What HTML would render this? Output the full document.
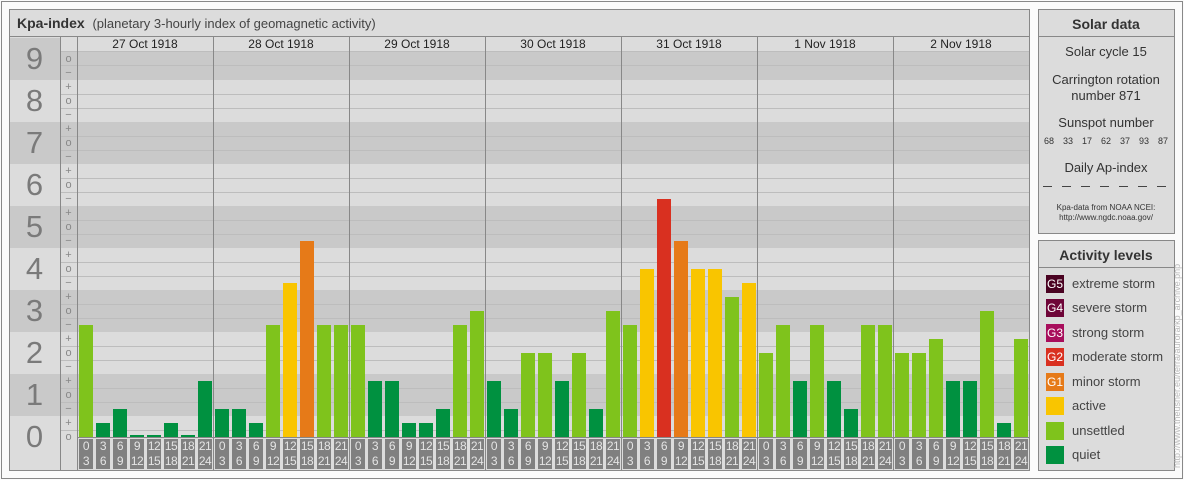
<!DOCTYPE html>
<html><head><meta charset="utf-8"><style>
*{margin:0;padding:0;box-sizing:border-box}
body{width:1184px;height:480px;background:#fbfbfb;position:relative;overflow:hidden;font-family:"Liberation Sans",sans-serif;color:#333}
.a{position:absolute}
.frame{left:1px;top:1px;width:1182px;height:478px;border:1px solid #888}
.panel{border:1px solid #888;background:#dcdcdc}
.bd{background:#c9c9c9}
.bl{background:#dcdcdc}
.hl{height:1px;background:#bdbdbd}
.vl{width:1px;background:#888}
.num{font-size:31px;color:#7a7a7a;text-align:center;width:51px;left:9px}
.sg{font-size:11px;color:#888;width:17px;left:60px;text-align:center;line-height:14px}
.b{position:absolute;width:14px}
.q{background:#009140}.u{background:#7fc31c}.y{background:#f9c500}.o{background:#e67a18}.r{background:#d93020}
.t{position:absolute;top:439px;width:14px;height:30px;background:#808080;color:#e4e4e4;font-size:12px;line-height:15px;text-align:center;letter-spacing:-0.5px}
.dt{font-size:12px;color:#222;top:37px;height:14px;line-height:14px;width:136px;text-align:center}
.c{text-align:center;width:136px;left:1038px;color:#333}
.sq{left:1046px;width:18px;height:18px;color:#fff;font-size:12px;line-height:18px;text-align:center}
.lt{left:1072px;font-size:13px;color:#444;line-height:18px}
.sn{position:absolute;top:136px;font-size:9px;line-height:10px;color:#333;width:20px;text-align:center}
.dd{position:absolute;top:186px;width:9px;height:1px;background:#444}
</style></head><body>
<div class="a frame"></div>
<div class="a panel" style="left:9px;top:9px;width:1021px;height:462px"></div>
<div class="a" style="left:10px;top:10px;width:1019px;height:27px;background:#dcdcdc;border-bottom:1px solid #888"></div>
<div class="a" style="left:17px;top:14px;font-size:14px;line-height:18px"><b style="color:#333">Kpa-index</b>&nbsp; <span style="font-size:13px;color:#444">(planetary 3-hourly index of geomagnetic activity)</span></div>
<div class="a bd" style="left:10px;top:38px;width:1019px;height:42px"></div>
<div class="a bl" style="left:10px;top:80px;width:1019px;height:42px"></div>
<div class="a bd" style="left:10px;top:122px;width:1019px;height:42px"></div>
<div class="a bl" style="left:10px;top:164px;width:1019px;height:42px"></div>
<div class="a bd" style="left:10px;top:206px;width:1019px;height:42px"></div>
<div class="a bl" style="left:10px;top:248px;width:1019px;height:42px"></div>
<div class="a bd" style="left:10px;top:290px;width:1019px;height:42px"></div>
<div class="a bl" style="left:10px;top:332px;width:1019px;height:42px"></div>
<div class="a bd" style="left:10px;top:374px;width:1019px;height:42px"></div>
<div class="a bl" style="left:10px;top:416px;width:1019px;height:54px"></div>
<div class="a hl" style="left:61px;top:65px;width:968px"></div>
<div class="a hl" style="left:61px;top:94px;width:968px"></div><div class="a hl" style="left:61px;top:108px;width:968px"></div>
<div class="a hl" style="left:61px;top:136px;width:968px"></div><div class="a hl" style="left:61px;top:150px;width:968px"></div>
<div class="a hl" style="left:61px;top:178px;width:968px"></div><div class="a hl" style="left:61px;top:192px;width:968px"></div>
<div class="a hl" style="left:61px;top:220px;width:968px"></div><div class="a hl" style="left:61px;top:234px;width:968px"></div>
<div class="a hl" style="left:61px;top:262px;width:968px"></div><div class="a hl" style="left:61px;top:276px;width:968px"></div>
<div class="a hl" style="left:61px;top:304px;width:968px"></div><div class="a hl" style="left:61px;top:318px;width:968px"></div>
<div class="a hl" style="left:61px;top:346px;width:968px"></div><div class="a hl" style="left:61px;top:360px;width:968px"></div>
<div class="a hl" style="left:61px;top:388px;width:968px"></div><div class="a hl" style="left:61px;top:402px;width:968px"></div>
<div class="a hl" style="left:61px;top:430px;width:968px"></div>
<div class="a" style="left:61px;top:38px;width:968px;height:14px;background:#dcdcdc;border-bottom:1px solid #bdbdbd"></div>
<div class="a dt" style="left:77px">27 Oct 1918</div>
<div class="a dt" style="left:213px">28 Oct 1918</div>
<div class="a dt" style="left:349px">29 Oct 1918</div>
<div class="a dt" style="left:485px">30 Oct 1918</div>
<div class="a dt" style="left:621px">31 Oct 1918</div>
<div class="a dt" style="left:757px">1 Nov 1918</div>
<div class="a dt" style="left:893px">2 Nov 1918</div>
<div class="a num" style="top:41px">9</div>
<div class="a num" style="top:83px">8</div>
<div class="a num" style="top:125px">7</div>
<div class="a num" style="top:167px">6</div>
<div class="a num" style="top:209px">5</div>
<div class="a num" style="top:251px">4</div>
<div class="a num" style="top:293px">3</div>
<div class="a num" style="top:335px">2</div>
<div class="a num" style="top:377px">1</div>
<div class="a num" style="top:419px">0</div>
<div class="a sg" style="top:52px">o<br>−<br>+<br>o<br>−<br>+<br>o<br>−<br>+<br>o<br>−<br>+<br>o<br>−<br>+<br>o<br>−<br>+<br>o<br>−<br>+<br>o<br>−<br>+<br>o<br>−<br>+<br>o</div>
<div class="a vl" style="left:60px;top:37px;height:433px"></div>
<div class="a vl" style="left:77px;top:37px;height:433px"></div>
<div class="a vl" style="left:213px;top:37px;height:433px"></div>
<div class="a vl" style="left:349px;top:37px;height:433px"></div>
<div class="a vl" style="left:485px;top:37px;height:433px"></div>
<div class="a vl" style="left:621px;top:37px;height:433px"></div>
<div class="a vl" style="left:757px;top:37px;height:433px"></div>
<div class="a vl" style="left:893px;top:37px;height:433px"></div>
<div class="a" style="left:77px;top:437px;width:952px;height:1px;background:#888"></div>
<div class="b u" style="left:79px;top:325px;height:112px"></div>
<div class="b q" style="left:96px;top:423px;height:14px"></div>
<div class="b q" style="left:113px;top:409px;height:28px"></div>
<div class="b q" style="left:130px;top:435px;height:2px"></div>
<div class="b q" style="left:147px;top:435px;height:2px"></div>
<div class="b q" style="left:164px;top:423px;height:14px"></div>
<div class="b q" style="left:181px;top:435px;height:2px"></div>
<div class="b q" style="left:198px;top:381px;height:56px"></div>
<div class="b q" style="left:215px;top:409px;height:28px"></div>
<div class="b q" style="left:232px;top:409px;height:28px"></div>
<div class="b q" style="left:249px;top:423px;height:14px"></div>
<div class="b u" style="left:266px;top:325px;height:112px"></div>
<div class="b y" style="left:283px;top:283px;height:154px"></div>
<div class="b o" style="left:300px;top:241px;height:196px"></div>
<div class="b u" style="left:317px;top:325px;height:112px"></div>
<div class="b u" style="left:334px;top:325px;height:112px"></div>
<div class="b u" style="left:351px;top:325px;height:112px"></div>
<div class="b q" style="left:368px;top:381px;height:56px"></div>
<div class="b q" style="left:385px;top:381px;height:56px"></div>
<div class="b q" style="left:402px;top:423px;height:14px"></div>
<div class="b q" style="left:419px;top:423px;height:14px"></div>
<div class="b q" style="left:436px;top:409px;height:28px"></div>
<div class="b u" style="left:453px;top:325px;height:112px"></div>
<div class="b u" style="left:470px;top:311px;height:126px"></div>
<div class="b q" style="left:487px;top:381px;height:56px"></div>
<div class="b q" style="left:504px;top:409px;height:28px"></div>
<div class="b u" style="left:521px;top:353px;height:84px"></div>
<div class="b u" style="left:538px;top:353px;height:84px"></div>
<div class="b q" style="left:555px;top:381px;height:56px"></div>
<div class="b u" style="left:572px;top:353px;height:84px"></div>
<div class="b q" style="left:589px;top:409px;height:28px"></div>
<div class="b u" style="left:606px;top:311px;height:126px"></div>
<div class="b u" style="left:623px;top:325px;height:112px"></div>
<div class="b y" style="left:640px;top:269px;height:168px"></div>
<div class="b r" style="left:657px;top:199px;height:238px"></div>
<div class="b o" style="left:674px;top:241px;height:196px"></div>
<div class="b y" style="left:691px;top:269px;height:168px"></div>
<div class="b y" style="left:708px;top:269px;height:168px"></div>
<div class="b u" style="left:725px;top:297px;height:140px"></div>
<div class="b y" style="left:742px;top:283px;height:154px"></div>
<div class="b u" style="left:759px;top:353px;height:84px"></div>
<div class="b u" style="left:776px;top:325px;height:112px"></div>
<div class="b q" style="left:793px;top:381px;height:56px"></div>
<div class="b u" style="left:810px;top:325px;height:112px"></div>
<div class="b q" style="left:827px;top:381px;height:56px"></div>
<div class="b q" style="left:844px;top:409px;height:28px"></div>
<div class="b u" style="left:861px;top:325px;height:112px"></div>
<div class="b u" style="left:878px;top:325px;height:112px"></div>
<div class="b u" style="left:895px;top:353px;height:84px"></div>
<div class="b u" style="left:912px;top:353px;height:84px"></div>
<div class="b u" style="left:929px;top:339px;height:98px"></div>
<div class="b q" style="left:946px;top:381px;height:56px"></div>
<div class="b q" style="left:963px;top:381px;height:56px"></div>
<div class="b u" style="left:980px;top:311px;height:126px"></div>
<div class="b q" style="left:997px;top:423px;height:14px"></div>
<div class="b u" style="left:1014px;top:339px;height:98px"></div>
<div class="t" style="left:79px">0<br>3</div><div class="t" style="left:96px">3<br>6</div><div class="t" style="left:113px">6<br>9</div><div class="t" style="left:130px">9<br>12</div><div class="t" style="left:147px">12<br>15</div><div class="t" style="left:164px">15<br>18</div><div class="t" style="left:181px">18<br>21</div><div class="t" style="left:198px">21<br>24</div>
<div class="t" style="left:215px">0<br>3</div><div class="t" style="left:232px">3<br>6</div><div class="t" style="left:249px">6<br>9</div><div class="t" style="left:266px">9<br>12</div><div class="t" style="left:283px">12<br>15</div><div class="t" style="left:300px">15<br>18</div><div class="t" style="left:317px">18<br>21</div><div class="t" style="left:334px">21<br>24</div>
<div class="t" style="left:351px">0<br>3</div><div class="t" style="left:368px">3<br>6</div><div class="t" style="left:385px">6<br>9</div><div class="t" style="left:402px">9<br>12</div><div class="t" style="left:419px">12<br>15</div><div class="t" style="left:436px">15<br>18</div><div class="t" style="left:453px">18<br>21</div><div class="t" style="left:470px">21<br>24</div>
<div class="t" style="left:487px">0<br>3</div><div class="t" style="left:504px">3<br>6</div><div class="t" style="left:521px">6<br>9</div><div class="t" style="left:538px">9<br>12</div><div class="t" style="left:555px">12<br>15</div><div class="t" style="left:572px">15<br>18</div><div class="t" style="left:589px">18<br>21</div><div class="t" style="left:606px">21<br>24</div>
<div class="t" style="left:623px">0<br>3</div><div class="t" style="left:640px">3<br>6</div><div class="t" style="left:657px">6<br>9</div><div class="t" style="left:674px">9<br>12</div><div class="t" style="left:691px">12<br>15</div><div class="t" style="left:708px">15<br>18</div><div class="t" style="left:725px">18<br>21</div><div class="t" style="left:742px">21<br>24</div>
<div class="t" style="left:759px">0<br>3</div><div class="t" style="left:776px">3<br>6</div><div class="t" style="left:793px">6<br>9</div><div class="t" style="left:810px">9<br>12</div><div class="t" style="left:827px">12<br>15</div><div class="t" style="left:844px">15<br>18</div><div class="t" style="left:861px">18<br>21</div><div class="t" style="left:878px">21<br>24</div>
<div class="t" style="left:895px">0<br>3</div><div class="t" style="left:912px">3<br>6</div><div class="t" style="left:929px">6<br>9</div><div class="t" style="left:946px">9<br>12</div><div class="t" style="left:963px">12<br>15</div><div class="t" style="left:980px">15<br>18</div><div class="t" style="left:997px">18<br>21</div><div class="t" style="left:1014px">21<br>24</div>
<div class="a panel" style="left:1038px;top:9px;width:137px;height:225px"></div>
<div class="a" style="left:1039px;top:10px;width:135px;height:27px;border-bottom:1px solid #888"></div>
<div class="a c" style="top:15px;font-size:14px;font-weight:bold;line-height:18px">Solar data</div>
<div class="a c" style="top:44px;font-size:13px;line-height:16px">Solar cycle 15</div>
<div class="a c" style="top:72px;font-size:13px;line-height:16px">Carrington rotation<br>number 871</div>
<div class="a c" style="top:115px;font-size:13px;line-height:16px">Sunspot number</div>
<div class="sn" style="left:1039px">68</div><div class="sn" style="left:1058px">33</div><div class="sn" style="left:1077px">17</div><div class="sn" style="left:1096px">62</div><div class="sn" style="left:1115px">37</div><div class="sn" style="left:1134px">93</div><div class="sn" style="left:1153px">87</div>
<div class="a c" style="top:160px;font-size:13px;line-height:16px">Daily Ap-index</div>
<div class="dd" style="left:1043px"></div><div class="dd" style="left:1062px"></div><div class="dd" style="left:1081px"></div><div class="dd" style="left:1100px"></div><div class="dd" style="left:1119px"></div><div class="dd" style="left:1138px"></div><div class="dd" style="left:1157px"></div>
<div class="a c" style="top:203px;font-size:8px;line-height:10px">Kpa-data from NOAA NCEI:<br>http://www.ngdc.noaa.gov/</div>
<div class="a panel" style="left:1038px;top:240px;width:137px;height:231px"></div>
<div class="a" style="left:1039px;top:241px;width:135px;height:27px;border-bottom:1px solid #888"></div>
<div class="a c" style="top:246px;font-size:14px;font-weight:bold;line-height:18px">Activity levels</div>
<div class="a sq" style="top:275px;background:#4a0322">G5</div><div class="a lt" style="top:275px">extreme storm</div>
<div class="a sq" style="top:299px;background:#6e0538">G4</div><div class="a lt" style="top:299px">severe storm</div>
<div class="a sq" style="top:324px;background:#a80e5c">G3</div><div class="a lt" style="top:324px">strong storm</div>
<div class="a sq" style="top:348px;background:#d93020">G2</div><div class="a lt" style="top:348px">moderate storm</div>
<div class="a sq" style="top:373px;background:#e67a18">G1</div><div class="a lt" style="top:373px">minor storm</div>
<div class="a sq" style="top:397px;background:#f9c500"></div><div class="a lt" style="top:397px">active</div>
<div class="a sq" style="top:422px;background:#7fc31c"></div><div class="a lt" style="top:422px">unsettled</div>
<div class="a sq" style="top:446px;background:#009140"></div><div class="a lt" style="top:446px">quiet</div>
<div class="a" style="left:1172px;top:468px;transform:rotate(-90deg);transform-origin:0 0;font-size:9px;color:#bbb;white-space:nowrap;line-height:11px">http://www.theusner.eu/terra/aurora/kp_archive.php</div>
</body></html>
